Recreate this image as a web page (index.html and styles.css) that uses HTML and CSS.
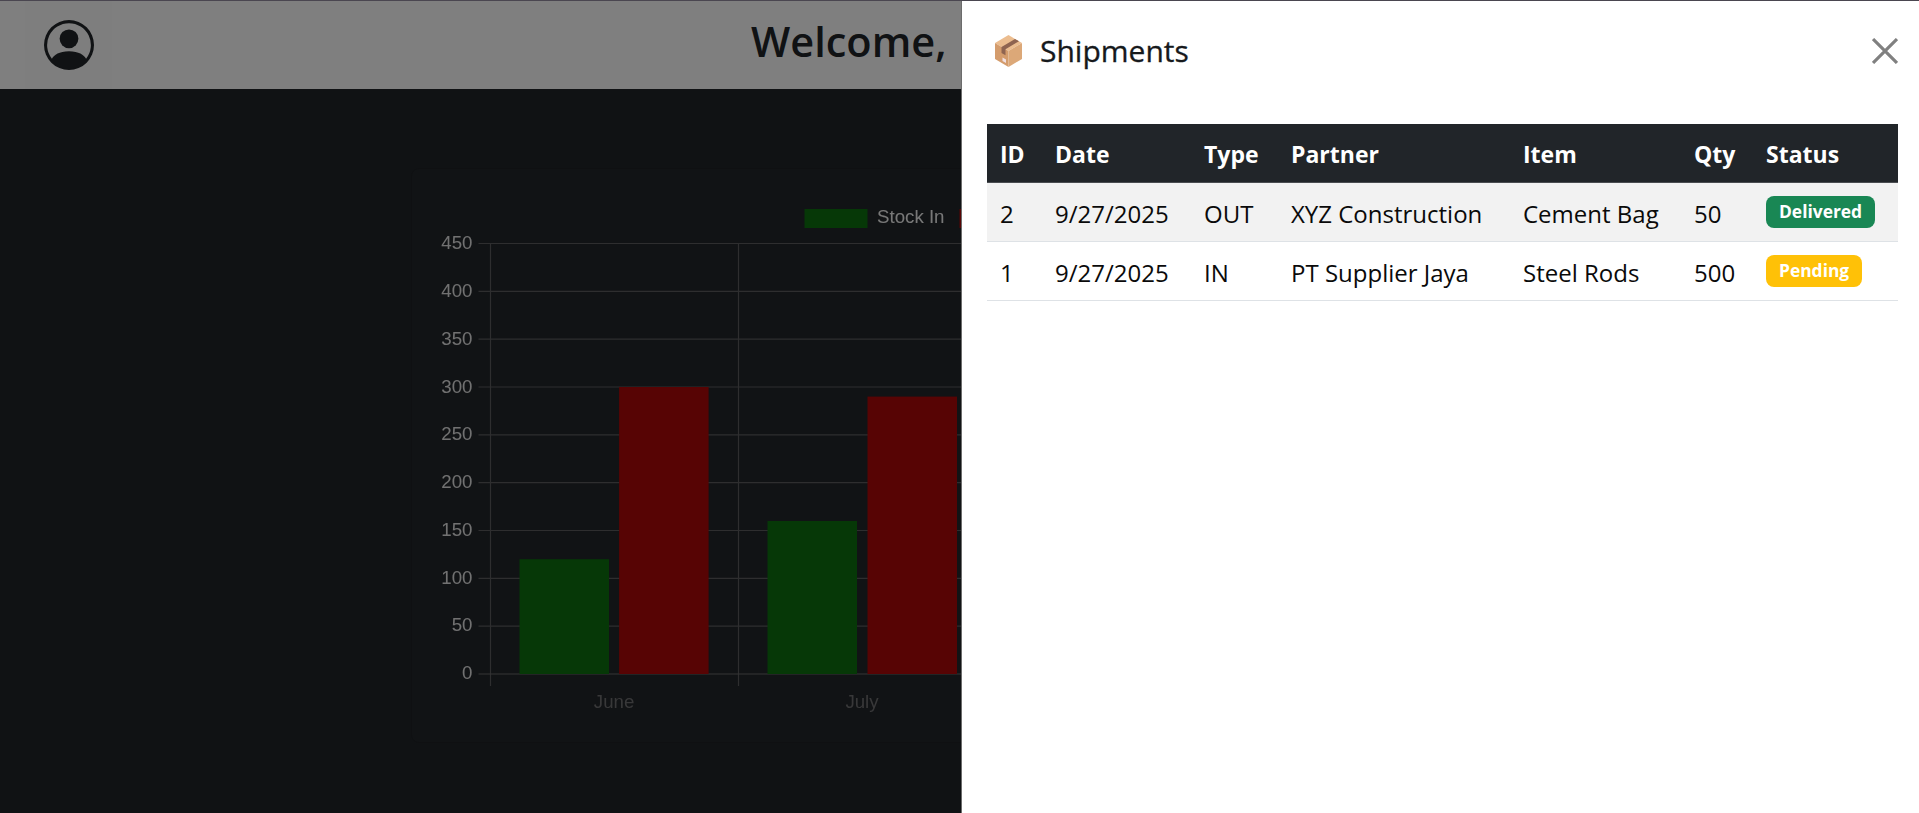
FILE: index.html
```html
<!DOCTYPE html>
<html lang="en">
<head>
  <meta charset="UTF-8">
  <title>Dashboard</title>
  <link rel="stylesheet" href="styles.css">
</head>
<body>
  <nav class="navbar">
    <button class="profile-btn" type="button" aria-label="Profile">
      <svg class="profile-icon" viewBox="0 0 16 16" fill="currentColor">
        <path d="M11 6a3 3 0 1 1-6 0 3 3 0 0 1 6 0z"/>
        <path fill-rule="evenodd" d="M0 8a8 8 0 1 1 16 0A8 8 0 0 1 0 8zm8-7a7 7 0 0 0-5.468 11.37C3.242 11.226 4.805 10 8 10s4.757 1.225 5.468 2.37A7 7 0 0 0 8 1z"/>
      </svg>
    </button>
    <h1 class="welcome">Welcome,</h1>
  </nav>

  <main class="content">
    <div class="chart-card">
      <svg class="chart" viewBox="410.5 168 1098 575">
        <!-- legend -->
        <rect class="stock-in" x="804" y="209" width="63" height="19"/>
        <text class="legend-label" x="876.5" y="222.5">Stock In</text>
        <rect class="stock-out" x="959" y="209" width="63" height="19"/>

        <!-- grid -->
        <g class="grid">
          <path d="M478 243.5H1500M478 291.3H1500M478 339.2H1500M478 387H1500M478 434.8H1500M478 482.7H1500M478 530.5H1500M478 578.3H1500M478 626.1H1500"/>
          <path d="M490 243.5V686M738 243.5V686"/>
        </g>
        <path class="axis" d="M478 674H1500"/>

        <!-- bars -->
        <rect class="stock-in" x="519" y="559.2" width="89.5" height="114.8"/>
        <rect class="stock-out" x="618.6" y="387" width="89.5" height="287"/>
        <rect class="stock-in" x="767" y="521" width="89.5" height="153"/>
        <rect class="stock-out" x="867" y="396.6" width="89.5" height="277.4"/>

        <!-- y axis labels -->
        <g class="y-labels">
          <text x="472" y="249">450</text>
          <text x="472" y="296.5">400</text>
          <text x="472" y="344.5">350</text>
          <text x="472" y="392.5">300</text>
          <text x="472" y="440">250</text>
          <text x="472" y="488">200</text>
          <text x="472" y="535.5">150</text>
          <text x="472" y="583.5">100</text>
          <text x="472" y="631">50</text>
          <text x="472" y="679">0</text>
        </g>

        <!-- x axis labels -->
        <g class="x-labels">
          <text x="613.6" y="708">June</text>
          <text x="861.5" y="708">July</text>
        </g>
      </svg>
    </div>
  </main>

  <div class="backdrop"></div>

  <aside class="panel">
    <header class="panel-header">
      <svg class="box-icon" viewBox="0 0 27 32">
        <path fill="#ecbd8f" d="M13.5 0 27 8 13.5 16 0 8z"/>
        <path fill="#d49c6c" d="M0 8 13.5 16V32L0 24z"/>
        <path fill="#dca878" d="M27 8 13.5 16V32L27 24z"/>
        <path fill="#8f6450" d="M20 3.9 6.5 11.9V18L10.5 20.3V14.2L24 6.2z"/>
        <path fill="#f1dfe0" d="M7.5 22.5 11 24.5V28L7.5 26z"/>
      </svg>
      <h2 class="panel-title">Shipments</h2>
      <button class="close-btn" type="button" aria-label="Close">
        <svg viewBox="0 0 25 25"><path d="M1 1 24 24M24 1 1 24"/></svg>
      </button>
    </header>

    <table class="shipments">
      <colgroup>
        <col class="col-id">
        <col class="col-date">
        <col class="col-type">
        <col class="col-partner">
        <col class="col-item">
        <col class="col-qty">
        <col class="col-status">
      </colgroup>
      <thead>
        <tr>
          <th>ID</th>
          <th>Date</th>
          <th>Type</th>
          <th>Partner</th>
          <th>Item</th>
          <th>Qty</th>
          <th>Status</th>
        </tr>
      </thead>
      <tbody>
        <tr class="striped">
          <td>2</td>
          <td>9/27/2025</td>
          <td>OUT</td>
          <td>XYZ Construction</td>
          <td>Cement Bag</td>
          <td>50</td>
          <td><span class="badge badge-green">Delivered</span></td>
        </tr>
        <tr>
          <td>1</td>
          <td>9/27/2025</td>
          <td>IN</td>
          <td>PT Supplier Jaya</td>
          <td>Steel Rods</td>
          <td>500</td>
          <td><span class="badge badge-yellow">Pending</span></td>
        </tr>
      </tbody>
    </table>
  </aside>
</body>
</html>
```

FILE: styles.css
```css
* {
  box-sizing: border-box;
}

html,
body {
  height: 100%;
}

body {
  margin: 0;
  overflow: hidden;
  border-top: 1px solid #4a4650;
  background: #212529;
  color: #212529;
  font-family: "Open Sans", "Noto Sans", sans-serif;
}

.navbar {
  display: flex;
  align-items: center;
  height: 88px;
  padding-left: 25px;
  background: #fff;
}

.profile-btn {
  display: flex;
  justify-content: center;
  width: 87px;
  height: 88px;
  align-items: center;
  padding: 0;
  border: none;
  background: #fcfcfc;
  color: #212529;
}

.profile-icon {
  width: 50px;
  height: 50px;
}

.welcome {
  margin: 0 0 9px 639px;
  font-size: 41.5px;
  font-weight: 600;
  white-space: nowrap;
}

.chart-card {
  width: 1098px;
  height: 575px;
  margin: 79px auto 0;
  border: 1px solid #1e2125;
  border-radius: 8px;
  background: #22262a;
}

.chart {
  display: block;
  width: 1098px;
  height: 575px;
  margin: -1px;
  filter: blur(0.4px);
}

.stock-in {
  fill: #0c700e;
}

.stock-out {
  fill: #ae0808;
}

.grid path {
  fill: none;
  stroke: #5c5d5f;
  stroke-width: 1.2;
}

.axis {
  fill: none;
  stroke: #6a6b6d;
  stroke-width: 1.2;
}

.legend-label,
.y-labels text,
.x-labels text {
  font-family: "Liberation Sans", Arial, sans-serif;
  font-size: 18.7px;
}

.legend-label {
  fill: #f0f0f0;
}

.y-labels text {
  fill: #e2e2e2;
  text-anchor: end;
}

.x-labels text {
  fill: #707072;
  text-anchor: middle;
}

.backdrop {
  position: fixed;
  top: 1px;
  left: 0;
  right: 0;
  bottom: 0;
  background: rgba(0, 0, 0, 0.5);
}

.panel {
  position: fixed;
  top: 1px;
  right: 0;
  bottom: 0;
  width: 958px;
  padding: 0 21px 0 25px;
  border-left: 1px solid #6c6c6c;
  background: #fff;
}

.panel-header {
  display: flex;
  align-items: center;
  height: 123px;
  padding: 0 0 23px 8px;
}

.box-icon {
  width: 27px;
  height: 32px;
  margin-right: 18px;
}

.panel-title {
  margin: 0;
  font-size: 30px;
  font-weight: 500;
  line-height: 1.2;
  color: #16191c;
  -webkit-text-stroke: 0.3px #16191c;
}

.close-btn {
  display: flex;
  width: 26px;
  height: 26px;
  margin-left: auto;
  padding: 0;
  border: none;
  background: none;
}

.close-btn svg {
  width: 26px;
  height: 26px;
}

.close-btn path {
  fill: none;
  stroke: #808080;
  stroke-width: 3;
}

.shipments {
  width: 911px;
  border-collapse: collapse;
  table-layout: fixed;
  font-size: 24px;
  color: #0a0a0a;
}

.col-id { width: 55px; }
.col-date { width: 149px; }
.col-type { width: 87px; }
.col-partner { width: 232px; }
.col-item { width: 171px; }
.col-qty { width: 72px; }
.col-status { width: 145px; }

.shipments th,
.shipments td {
  height: 59px;
  padding: 3px 13px 0;
  text-align: left;
  white-space: nowrap;
}

.shipments th {
  height: 58px;
  background: #212529;
  border-bottom: 1px solid #4a4d51;
  color: #fff;
  font-size: 23px;
  font-weight: 700;
}

.shipments td {
  border-bottom: 1px solid #dee2e6;
}

.striped td {
  background: #f2f2f2;
}

.badge {
  display: inline-block;
  position: relative;
  top: -3px;
  padding: 0 13px;
  height: 32px;
  border-radius: 8px;
  color: #fff;
  font-size: 17.4px;
  font-weight: 700;
  line-height: 31px;
  vertical-align: middle;
}

.badge-green {
  background: #198754;
}

.badge-yellow {
  background: #ffc107;
}
```
